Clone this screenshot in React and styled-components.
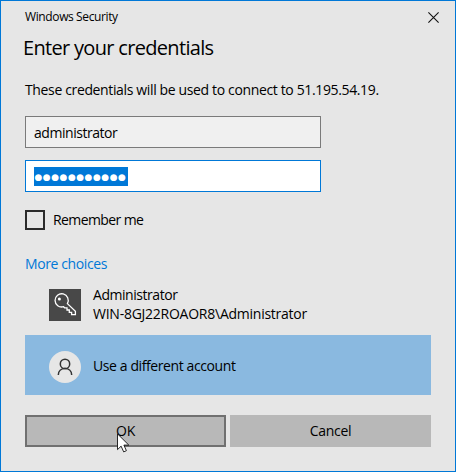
import styled, { createGlobalStyle } from "styled-components";
import { useState } from "react";

export default function App() {
    const [username, setUsername] = useState("administrator");
    const [remember, setRemember] = useState(false);
    const [selected, setSelected] = useState("other");

    return (
        <>
            <GlobalStyle />
            <Dialog>
                <TitleBar>
                    <WindowName>Windows Security</WindowName>
                    <CloseButton type="button" aria-label="Close">
                        <svg width="11" height="11" viewBox="0 0 11 11">
                            <path d="M0.4 0.4L10.6 10.6M10.6 0.4L0.4 10.6" stroke="#111" strokeWidth="1.1" fill="none" />
                        </svg>
                    </CloseButton>
                </TitleBar>
                <Title>Enter your credentials</Title>
                <Message>These credentials will be used to connect to 51.195.54.19.</Message>
                <Input value={username} onChange={(e) => setUsername(e.target.value)} />
                <PasswordField>
                    <Selection>{"●".repeat(11)}</Selection>
                </PasswordField>
                <Remember>
                    <Checkbox type="checkbox" checked={remember} onChange={() => setRemember(!remember)} />
                    <RememberLabel $spacing="-0.6px">Remember me</RememberLabel>
                </Remember>
                <MoreChoices>More choices</MoreChoices>
                <Account $selected={selected === "admin"} onClick={() => setSelected("admin")}>
                    <KeyTile><KeyIcon /></KeyTile>
                    <AccountText $lift="2px">
                        <Label>Administrator</Label>
                        <Label $spacing="-0.25px">WIN-8GJ22ROAOR8\Administrator</Label>
                    </AccountText>
                </Account>
                <Account $selected={selected === "other"} onClick={() => setSelected("other")}>
                    <Avatar><PersonIcon /></Avatar>
                    <AccountText>
                        <Label $spacing="-0.4px">Use a different account</Label>
                    </AccountText>
                </Account>
                <Footer>
                    <Button type="button" $primary>OK</Button>
                    <Button type="button">Cancel</Button>
                </Footer>
                <Pointer />
            </Dialog>
        </>
    )
}

function KeyIcon() {
    return (
        <svg width="32" height="32" viewBox="0 0 32 32" fill="none" stroke="#fff" strokeWidth="1.3">
            <path d="M18.4 14.6L26.4 22.3V25.6H22.6V23.3H20.3V21H18V18.8H15.6L14.5 17.7A6.6 6.6 0 1 1 18.4 14.6Z" />
            <circle cx="10.4" cy="10.1" r="1.5" fill="#fff" stroke="none" />
        </svg>
    )
}

function PersonIcon() {
    return (
        <svg width="32" height="32" viewBox="0 0 32 32" fill="none" stroke="#333" strokeWidth="1.5">
            <circle cx="16" cy="12.9" r="4.7" />
            <path d="M9.3 24C9.3 20 12.2 17.6 16 17.6S22.7 20 22.7 24" />
        </svg>
    )
}

function Pointer() {
    return (
        <PointerSvg width="13" height="20" viewBox="0 0 13 20">
            <path d="M0.5 0.9V16.6L4.1 13.2L6.7 18.9L9.4 17.7L6.9 12.1H11.8Z" fill="#fff" stroke="#111" strokeWidth="0.9" />
        </PointerSvg>
    )
}

const GlobalStyle = createGlobalStyle`
* {
    box-sizing: border-box;
}
body {
    margin: 0;
    color: #000;
    font-family: "Open Sans", "Noto Sans", sans-serif;
}
`

const Dialog = styled.div`
position: relative;
display: flex;
flex-direction: column;
width: 456px;
height: 472px;
padding: 0 24px;
border: 1px solid #0078d7;
background-color: #e6e6e6;
`

const TitleBar = styled.div`
display: flex;
justify-content: space-between;
align-items: center;
height: 31px;
`

const WindowName = styled.span`
font-size: 12px;
line-height: 16px;
letter-spacing: -0.38px;
`

const CloseButton = styled.button`
display: flex;
margin: 1px -8px 0 0;
padding: 0;
border: none;
background: none;
`

const Title = styled.h1`
margin: 0 0 0 -2px;
height: 31px;
font-weight: 400;
font-size: 20px;
line-height: 31px;
letter-spacing: -0.68px;
`

const Message = styled.p`
margin: 17px 0 16px;
font-size: 14px;
line-height: 20px;
letter-spacing: -0.36px;
white-space: nowrap;
`

const Input = styled.input`
width: 296px;
height: 32px;
padding: 0 8px 0 8px;
border: 1px solid #7a7a7a;
background-color: #f0f0f0;
outline: none;
font-family: inherit;
font-size: 14px;
letter-spacing: -0.46px;
`

const PasswordField = styled.div`
display: flex;
align-items: flex-start;
width: 296px;
height: 32px;
margin-top: 12px;
padding: 6px 8px;
border: 1px solid #0078d7;
background-color: #fff;
`

const Selection = styled.span`
width: 94px;
height: 19px;
padding-left: 0.5px;
background-color: #0078d7;
color: #fff;
font-family: "DejaVu Sans", sans-serif;
font-size: 9px;
line-height: 21px;
letter-spacing: 0.5px;
white-space: nowrap;
`

const Remember = styled.label`
display: flex;
align-items: center;
gap: 8px;
height: 20px;
margin-top: 18px;
`

const Checkbox = styled.input`
appearance: none;
width: 20px;
height: 20px;
margin: 0;
border: 2px solid #2b2b2b;
background-color: ${({ checked }) => (checked ? "#0078d7" : "transparent")};
`

const Label = styled.span`
font-size: 14px;
line-height: 19px;
letter-spacing: ${({ $spacing }) => $spacing || "-0.45px"};
white-space: nowrap;
`

const RememberLabel = styled(Label)`
padding-bottom: 2px;
`

const MoreChoices = styled.a`
margin: 24px 0 1px;
color: #0078d7;
font-size: 14px;
line-height: 20px;
letter-spacing: -0.4px;
`

const Account = styled.div`
display: flex;
align-items: center;
gap: 12px;
width: 406px;
height: 60px;
padding-left: 24px;
background-color: ${({ $selected }) => ($selected ? "#8ab9e0" : "transparent")};
`

const KeyTile = styled.div`
width: 32px;
height: 32px;
background-color: #484848;
`

const Avatar = styled(KeyTile)`
margin-top: 4px;
border-radius: 50%;
background-color: #e6e6e6;
`

const AccountText = styled.div`
display: flex;
flex-direction: column;
padding-bottom: ${({ $lift }) => $lift || "0"};
`

const Footer = styled.div`
display: flex;
gap: 4px;
margin-top: 20px;
`

const Button = styled.button`
width: 201px;
height: 32px;
padding: 0 0 2px;
border: ${({ $primary }) => ($primary ? "2px solid #707070" : "none")};
background-color: #b8b8b8;
color: #000;
font-family: inherit;
font-size: 14px;
letter-spacing: -0.3px;
`

// mouse pointer resting over the OK button
const PointerSvg = styled.svg`
position: absolute;
left: 116px;
top: 432px;
`
